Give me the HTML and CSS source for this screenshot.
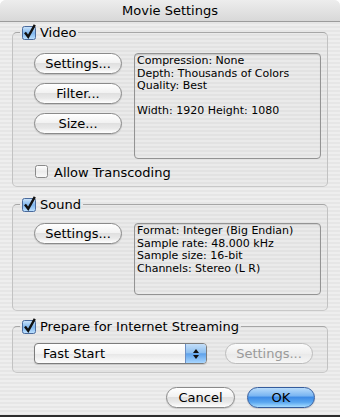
FILE: index.html
```html
<!DOCTYPE html>
<html lang="en">
<head>
    <meta charset="UTF-8">
    <title>Movie Settings</title>
    <link rel="stylesheet" href="styles.css">
</head>
<body>
<div class="window">
    <div class="titlebar">Movie Settings</div>
    <div class="content">
        <fieldset class="group video">
            <legend>
                <svg class="cb" width="15" height="16" viewBox="0 0 15 16"><defs><linearGradient id="cbg" x1="0" y1="0" x2="0" y2="1"><stop offset="0" stop-color="#cfe6fb"/><stop offset="0.5" stop-color="#7fb6ee"/><stop offset="1" stop-color="#bfe2ff"/></linearGradient></defs><rect x="0.5" y="2.5" width="13" height="13" rx="2" fill="url(#cbg)" stroke="#4a6a9c"/><path d="M3 8.5 L6.2 12.8 L12.8 0.8" fill="none" stroke="#111" stroke-width="2.4"/></svg>
                Video
            </legend>
            <div class="group-row">
                <div class="btn-col">
                    <button class="aqua">Settings...</button>
                    <button class="aqua">Filter...</button>
                    <button class="aqua">Size...</button>
                </div>
                <div class="info tall">Compression: None<br>Depth: Thousands of Colors<br>Quality: Best<br><br>Width: 1920 Height: 1080</div>
            </div>
            <label class="option">
                <svg class="cb" width="14" height="14" viewBox="0 0 14 14"><defs><linearGradient id="cbw" x1="0" y1="0" x2="0" y2="1"><stop offset="0" stop-color="#ffffff"/><stop offset="0.5" stop-color="#ececec"/><stop offset="1" stop-color="#fafafa"/></linearGradient></defs><rect x="0.5" y="0.5" width="12" height="12" rx="2" fill="url(#cbw)" stroke="#8a8a8a"/></svg>
                Allow Transcoding
            </label>
        </fieldset>

        <fieldset class="group sound">
            <legend>
                <svg class="cb" width="15" height="16" viewBox="0 0 15 16"><rect x="0.5" y="2.5" width="13" height="13" rx="2" fill="url(#cbg)" stroke="#4a6a9c"/><path d="M3 8.5 L6.2 12.8 L12.8 0.8" fill="none" stroke="#111" stroke-width="2.4"/></svg>
                Sound
            </legend>
            <div class="group-row">
                <div class="btn-col">
                    <button class="aqua">Settings...</button>
                </div>
                <div class="info short">Format: Integer (Big Endian)<br>Sample rate: 48.000 kHz<br>Sample size: 16-bit<br>Channels: Stereo (L R)</div>
            </div>
        </fieldset>

        <fieldset class="group stream">
            <legend>
                <svg class="cb" width="15" height="16" viewBox="0 0 15 16"><rect x="0.5" y="2.5" width="13" height="13" rx="2" fill="url(#cbg)" stroke="#4a6a9c"/><path d="M3 8.5 L6.2 12.8 L12.8 0.8" fill="none" stroke="#111" stroke-width="2.4"/></svg>
                Prepare for Internet Streaming
            </legend>
            <div class="group-row">
                <div class="popup">
                    <span class="popup-label">Fast Start</span>
                    <span class="popup-arrows">
                        <svg width="8" height="12" viewBox="0 0 8 12"><path d="M4 1 L7 5 L1 5 Z M4 11 L7 7 L1 7 Z" fill="#111"/></svg>
                    </span>
                </div>
                <button class="aqua disabled">Settings...</button>
            </div>
        </fieldset>
    </div>
    <div class="actions">
        <button class="aqua cancel">Cancel</button>
        <button class="aqua default">OK</button>
    </div>
</div>
</body>
</html>
```

FILE: styles.css
```css
body{
    margin: 0;
    background: #fff;
    font-family: "DejaVu Sans", "Liberation Sans", sans-serif;
    color: #000;
}
.window{
    width: 340px;
    height: 417px;
    box-sizing: border-box;
    display: flex;
    flex-direction: column;
    overflow: hidden;
    border-radius: 6px 6px 0 0;
    border-bottom: 2px solid #2e2e2e;
    background: repeating-linear-gradient(to bottom, #eeeeee 0, #eeeeee 2px, #e6e6e6 2px, #e6e6e6 4px);
}
.titlebar{
    height: 21px;
    line-height: 22px;
    text-align: center;
    font-size: 13px;
    border-bottom: 1px solid #9c9c9c;
    background: linear-gradient(#ededed, #d8d8d8);
}
.content{
    padding: 2px 12px 0;
}
fieldset.group{
    margin: 0;
    min-width: 0;
    border: 1px solid;
    border-color: #a6a6a6 #c2c2c2 #c8c8c8;
    border-radius: 5px;
    background: rgba(0, 0, 0, 0.015);
    padding: 13px 6px 6px 21px;
}
fieldset.group legend{
    display: flex;
    align-items: center;
    gap: 3px;
    height: 16px;
    padding: 0 2px;
    margin-left: -14px;
    font-size: 13px;
}
.cb{
    display: block;
    overflow: visible;
    flex: none;
}
.group-row{
    display: flex;
    gap: 12px;
}
.btn-col{
    display: flex;
    flex-direction: column;
    gap: 9px;
    width: 88px;
}
button.aqua{
    height: 21px;
    box-sizing: border-box;
    padding: 0;
    border: 1px solid #8a8a8a;
    border-radius: 11px;
    font-family: inherit;
    font-size: 13px;
    color: #000;
    background: linear-gradient(#ffffff 0%, #f2f2f2 45%, #e0e0e0 50%, #e9e9e9 75%, #ffffff 100%);
    box-shadow: 0 1px 1px rgba(0, 0, 0, 0.15);
}
.btn-col button.aqua{
    width: 88px;
}
.info{
    width: 187px;
    box-sizing: border-box;
    border: 1px solid #939393;
    border-radius: 4px;
    padding: 1px 2px;
    font-size: 11px;
    line-height: 12.6px;
    box-shadow: inset 0 1px 1px rgba(0, 0, 0, 0.12);
}
.info.tall{
    height: 106px;
}
.info.short{
    height: 72px;
}
.option{
    display: flex;
    align-items: center;
    gap: 5px;
    height: 16px;
    margin: 5px 0 0 1px;
    font-size: 13px;
}
fieldset.sound{
    margin-top: 9px;
    padding-top: 11px;
    padding-bottom: 15px;
}
fieldset.stream{
    margin-top: 7px;
    padding-top: 9px;
    padding-bottom: 8px;
}
.stream .group-row{
    gap: 18px;
}
.popup{
    display: flex;
    width: 173px;
    height: 21px;
    box-sizing: border-box;
    border: 1px solid #7c7c7c;
    border-radius: 4px;
    overflow: hidden;
    background: linear-gradient(#ffffff 0%, #f4f4f4 50%, #e6e6e6 51%, #fdfdfd 100%);
    box-shadow: 0 1px 1px rgba(0, 0, 0, 0.15);
}
.popup-label{
    flex: 1;
    padding-left: 8px;
    font-size: 13px;
    line-height: 19px;
}
.popup-arrows{
    width: 20px;
    display: flex;
    align-items: center;
    justify-content: center;
    border-left: 1px solid #6b8fc4;
    background: linear-gradient(#c4def8 0%, #8fc0f0 45%, #5fa2ea 52%, #a8d6ff 100%);
}
button.aqua.disabled{
    width: 88px;
    color: #9a9a9a;
    border-color: #bcbcbc;
    background: linear-gradient(#fbfbfb, #eeeeee 50%, #e8e8e8 51%, #f6f6f6);
    box-shadow: none;
}
.actions{
    display: flex;
    justify-content: flex-end;
    gap: 12px;
    padding: 14px 25px 0 0;
}
.actions .cancel{
    width: 69px;
}
.actions .default{
    width: 68px;
    border-color: #355c9c;
    background: linear-gradient(#b9dcfb 0%, #7bb6f2 40%, #3f8ce6 50%, #5aa7f0 75%, #a6dcff 100%);
}
```
